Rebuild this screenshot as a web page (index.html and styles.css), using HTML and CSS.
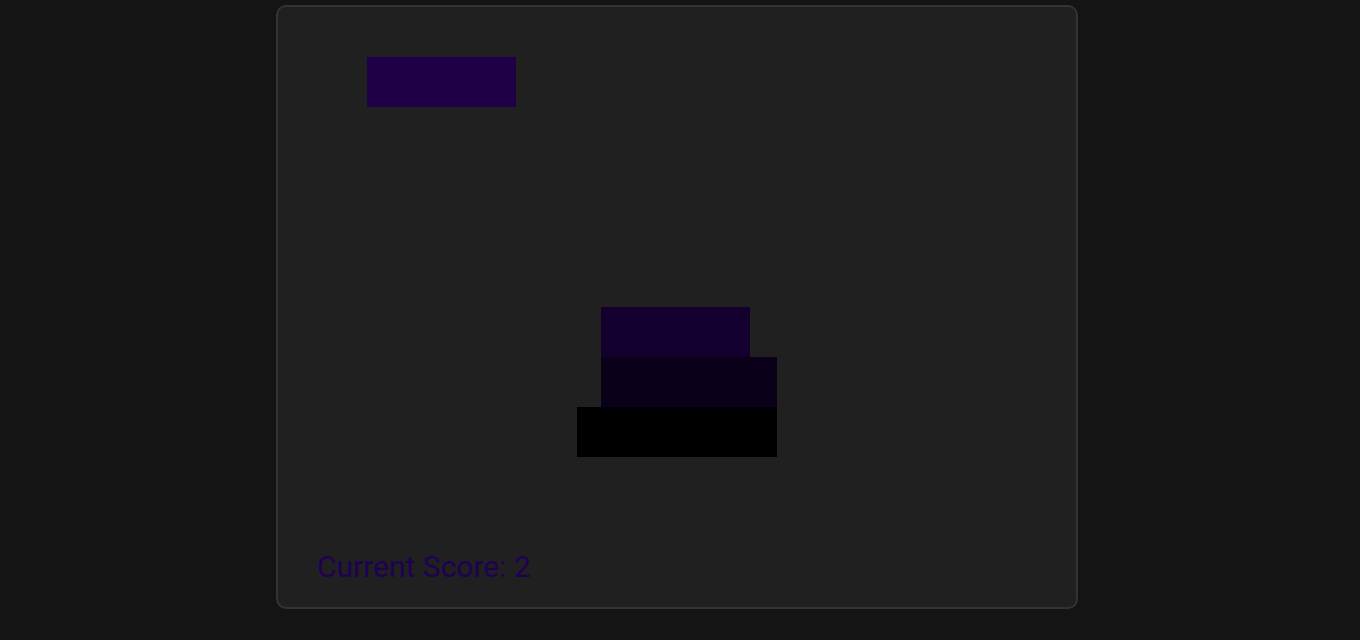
FILE: index.html
```html
<!DOCTYPE html>
<html>
<head>
<meta charset="utf-8">
<link rel="stylesheet" href="styles.css">
</head>
<body>
<main class="game">
  <div class="board">
    <div class="block moving" style="left:89px;top:50px;width:149px"></div>
    <div class="block b3" style="left:323px;top:300px;width:149px"></div>
    <div class="block b2" style="left:323px;top:350px;width:176px"></div>
    <div class="block b1" style="left:299px;top:400px;width:200px"></div>
  </div>
  <div class="score">Current Score: 2</div>
</main>
</body>
</html>
```
FILE: styles.css
```css
html, body {
  margin: 0;
  padding: 0;
  background: #141414;
  font-family: Roboto, "Liberation Sans", sans-serif;
}
body {
  width: 1360px;
  height: 640px;
  overflow: hidden;
}
.game {
  position: relative;
  box-sizing: border-box;
  margin: 5px 0 0 276px;
  width: 802px;
  height: 604px;
  background: #202020;
  border: 2px solid #333333;
  border-radius: 10px;
  display: flex;
  flex-direction: column;
}
.board {
  position: relative;
  flex: 1;
}
.block {
  position: absolute;
  height: 50px;
}
.moving { background: #1f0046; }
.b3 { background: #14002f; }
.b2 { background: #0b0019; }
.b1 { background: #000000; }
.score {
  font-size: 30px;
  line-height: 36px;
  color: #1f0052;
  padding: 0 0 22px 39px;
}
```
